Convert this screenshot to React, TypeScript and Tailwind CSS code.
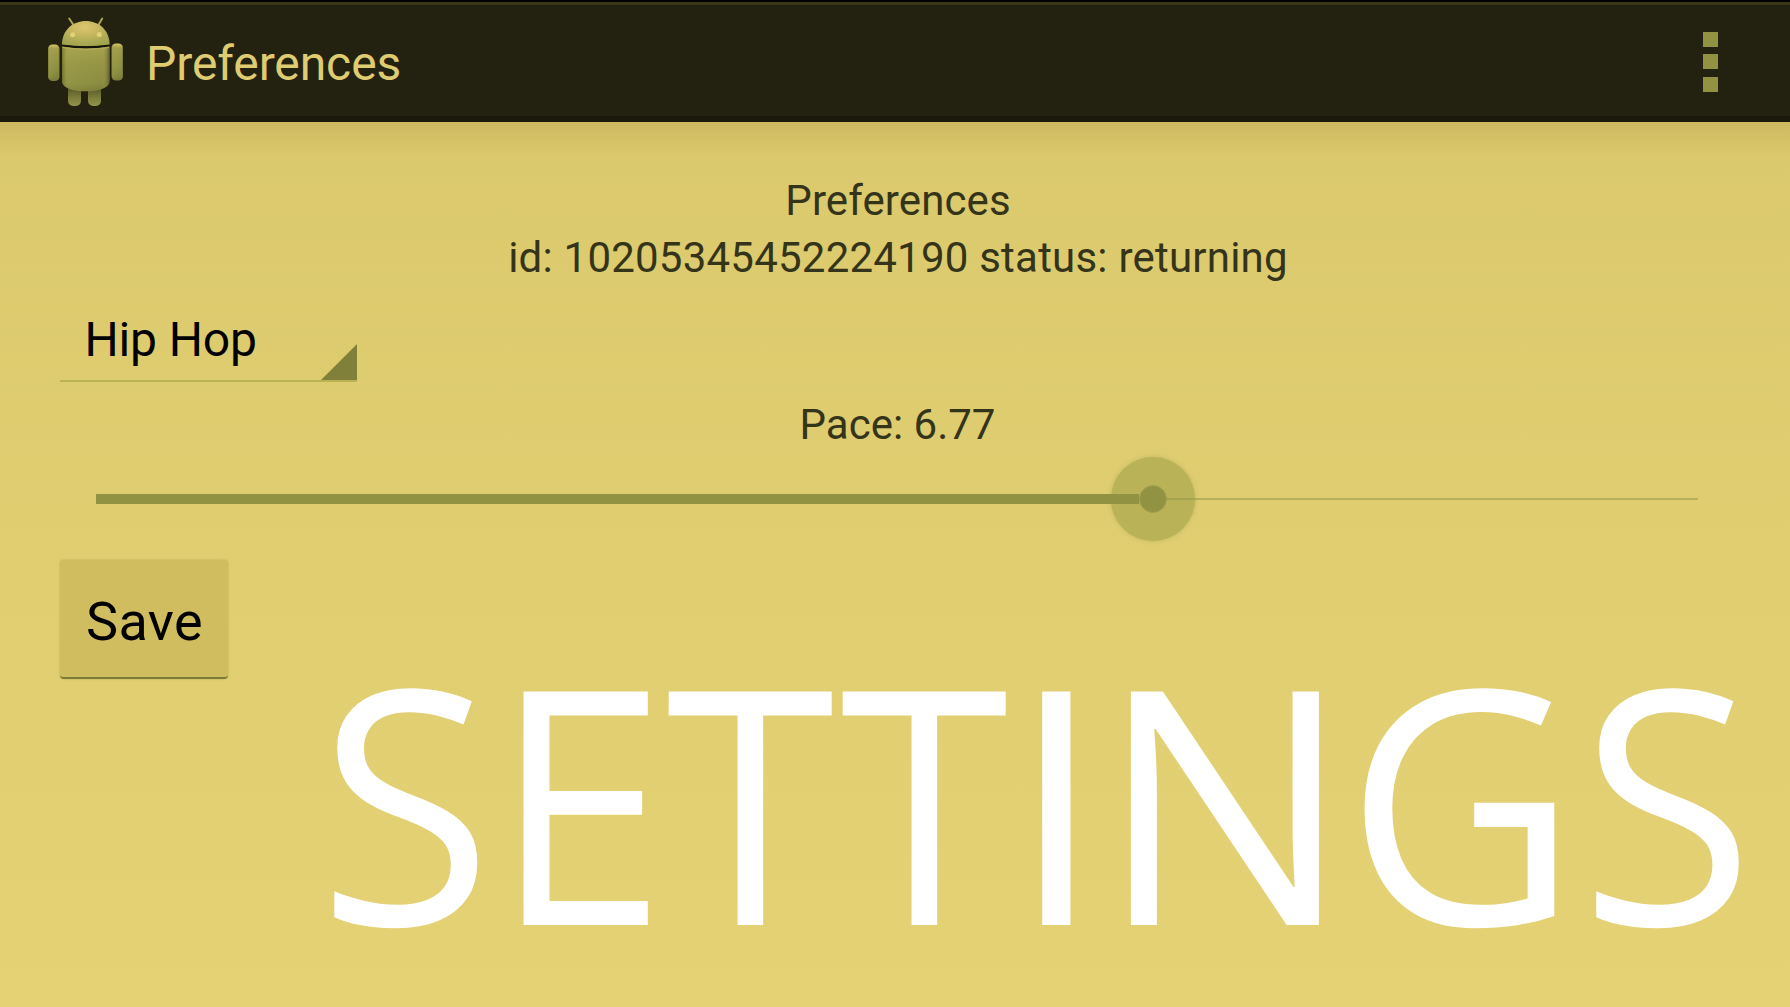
function AndroidIcon() {
  return (
    <svg width="90" height="100" viewBox="40 10 90 100" className="block shrink-0">
      <defs>
        <radialGradient id="head" cx="0.48" cy="0.25" r="0.75">
          <stop offset="0" stopColor="#dac66d" />
          <stop offset="0.35" stopColor="#cbb963" />
          <stop offset="0.75" stopColor="#aeab55" />
          <stop offset="1" stopColor="#a3a34f" />
        </radialGradient>
        <linearGradient id="body" x1="0" y1="0" x2="0" y2="1">
          <stop offset="0" stopColor="#a5a34e" />
          <stop offset="0.4" stopColor="#949445" />
          <stop offset="0.8" stopColor="#8b8d41" />
          <stop offset="1" stopColor="#7c7d39" />
        </linearGradient>
        <linearGradient id="side" x1="0" y1="0" x2="1" y2="0">
          <stop offset="0" stopColor="#55551f" stopOpacity="0.55" />
          <stop offset="0.1" stopColor="#a8a750" stopOpacity="0.3" />
          <stop offset="0.85" stopColor="#a8a750" stopOpacity="0" />
          <stop offset="1" stopColor="#4c4c20" stopOpacity="0.75" />
        </linearGradient>
        <linearGradient id="arm" x1="0" y1="0" x2="0" y2="1">
          <stop offset="0" stopColor="#d8c468" />
          <stop offset="0.12" stopColor="#a09d4b" />
          <stop offset="0.7" stopColor="#8b8d42" />
          <stop offset="1" stopColor="#7a7c38" />
        </linearGradient>
        <linearGradient id="leg" x1="0" y1="0" x2="0" y2="1">
          <stop offset="0.2" stopColor="#5f612c" />
          <stop offset="0.6" stopColor="#7c7e3a" />
          <stop offset="1" stopColor="#92944a" />
        </linearGradient>
      </defs>
      <path d="M69.200 18.500l4 6M102.200 18.500l-3.500 6" stroke="#aca650" strokeWidth="2" strokeLinecap="round" />
      <path d="M68 86h13v15a5 5 0 0 1-5 5h-3a5 5 0 0 1-5-5zM88 86h13v15a5 5 0 0 1-5 5h-3a5 5 0 0 1-5-5z" fill="url(#leg)" />
      <rect x="48" y="44.500" width="11.500" height="36.500" rx="4.500" fill="url(#arm)" />
      <rect x="48" y="46.500" width="11.500" height="32" rx="3" fill="url(#side)" />
      <rect x="111.500" y="43.500" width="11.500" height="37" rx="4.500" fill="url(#arm)" />
      <rect x="111.500" y="46" width="11.500" height="32" rx="3" fill="url(#side)" />
      <path d="M62 44.500C62 30 73 21 85.800 21S109.600 30 109.600 44.500Q86 48 62 44.500z" fill="url(#head)" />
      <path d="M62 45Q86 47.500 109.600 45L109.600 46.500Q86 51 62 46.500z" fill="#15140a" />
      <path d="M62 46.500Q86 50.500 109.600 46.500V81C109.600 88 99 91.300 86 91.300S62 88 62 81z" fill="url(#body)" />
      <path d="M62 46.500Q86 50.500 109.600 46.500V81C109.600 88 99 91.300 86 91.300S62 88 62 81z" fill="url(#side)" />
      <path d="M62.500 47.500Q86 51 109 47.500" fill="none" stroke="#b9ad5a" strokeWidth="1" />
      <circle cx="72.700" cy="34.700" r="2.500" fill="#e3d175" />
      <circle cx="99.200" cy="34.500" r="2.500" fill="#e3d175" />
    </svg>
  );
}

function ActionBar() {
  return (
    <header className="flex h-[122px] shrink-0 flex-col border-t-2 border-b-[6px] border-t-black border-b-[#1a190b] bg-[#232110]">
      <div className="h-[3px] shrink-0 bg-[#3b3817]" />
      <div className="flex flex-1 items-start justify-between pl-10 pr-[72px]">
        <div className="flex pt-[5px]">
          <AndroidIcon />
          <h1 className="ml-4 mt-[26px] text-[48px] leading-[56px] tracking-[-0.1px] text-[#dfcb70]">Preferences</h1>
        </div>
        <button className="mt-[27px] flex flex-col gap-[7px]" aria-label="More options">
          <span className="block size-[15px] bg-[#919343]" />
          <span className="block size-[15px] bg-[#919343]" />
          <span className="mt-px block size-[15px] bg-[#919343]" />
        </button>
      </div>
    </header>
  );
}

function Slider() {
  return (
    <div className="relative ml-9 mt-1 flex h-[84px] w-[1602px] items-center">
      <div className="absolute left-[1015px] top-0 size-[84px] rounded-full bg-[#b9b256] shadow-[0_0_4px_rgba(145,147,67,0.4)]" />
      <div className="relative h-[10px] w-[1043px] bg-[#919343]" />
      <div className="relative h-[2px] flex-1 bg-[#919343]/50" />
      <div className="absolute left-[1043px] top-[28px] size-7 rounded-full border border-[#a3a14c] bg-[#919343]" />
    </div>
  );
}

function Caption() {
  return (
    <div className="-mt-[75px] ml-[257.5px] flex font-['Open_Sans',sans-serif] text-[327px] leading-[388px] text-white">
      <span className="w-[175.3px] origin-left scale-x-[0.973]">S</span>
      <span className="w-[173.2px] origin-left scale-x-[0.956]">E</span>
      <span className="w-[174.5px] origin-left scale-x-[0.9375]">T</span>
      <span className="w-[168.8px] origin-left scale-x-[0.9375]">T</span>
      <span className="w-[89px] origin-left scale-x-[1.04]">I</span>
      <span className="w-[246.7px] origin-left scale-x-[1.03]">N</span>
      <span className="w-[235.5px] origin-left scale-x-[0.981]">G</span>
      <span className="w-[180px] origin-left scale-x-[0.97]">S</span>
    </div>
  );
}

export default function App() {
  return (
    <div className="flex h-[1007px] w-[1790px] flex-col overflow-hidden bg-linear-to-b from-[#dac86c] to-[#e4d275] font-['Roboto',sans-serif]">
      <ActionBar />
      <div className="-mb-9 h-9 shrink-0 bg-linear-to-b from-[#b39e48]/35 to-transparent" />
      <main className="flex flex-1 flex-col pl-[60px] pt-[50px]">
        <div className="w-[1675px] text-center text-[42px] leading-[57px] text-[#34341a]">
          <p className="pl-px tracking-[0.1px]">Preferences</p>
          <p className="pl-px tracking-[0.22px]">id: 10205345452224190 status: returning</p>
        </div>
        <div className="mt-[16px] flex h-[80px] w-[297px] justify-between border-b-2 border-[#bab255]">
          <span className="ml-[24.5px] mt-[10px] text-[48px] leading-[56px] tracking-[-0.15px] text-black">Hip Hop</span>
          <svg width="36" height="36" className="self-end"><path d="M0 36L36 0V36z" fill="#80803a" /></svg>
        </div>
        <p className="mt-[14px] w-[1675px] text-center text-[42px] leading-[57px] text-[#34341a]">Pace: 6.77</p>
        <Slider />
        <div className="mt-[19px] flex">
          <button className="h-[119px] w-[168px] shrink-0 rounded-[4px] border-b-2 border-[#7d7a35] bg-[#cfbd60] pl-px pt-[5px] text-[54px] tracking-[0.4px] text-black shadow-[0_0_2px_#b4a550]">
            Save
          </button>
        </div>
        <Caption />
      </main>
    </div>
  );
}
